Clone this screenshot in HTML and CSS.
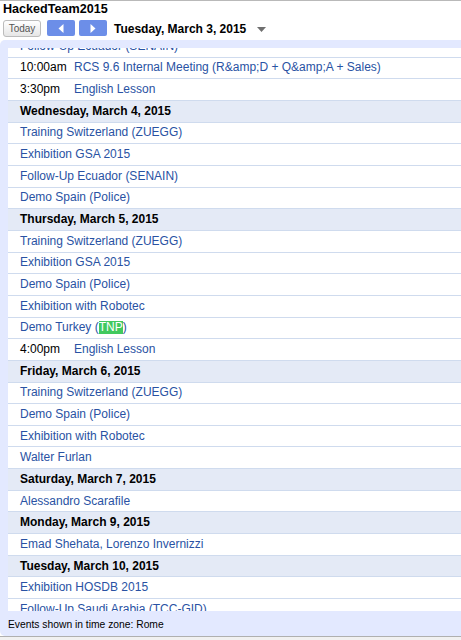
FILE: index.html
```html
<!DOCTYPE html>
<html>
<head>
<meta charset="utf-8">
<title>HackedTeam2015</title>
<link rel="stylesheet" href="styles.css">
</head>
<body>
<div class="page">
  <div class="cal-title">HackedTeam2015</div>
  <div class="toolbar">
    <button class="btn-today">Today</button>
    <div class="nav">
      <button class="btn-nav" aria-label="Previous"><svg width="6" height="9" viewBox="0 0 6 9"><polygon points="5.5,0 5.5,9 0.5,4.5" fill="#fff"/></svg></button>
      <button class="btn-nav" aria-label="Next"><svg width="6" height="9" viewBox="0 0 6 9"><polygon points="0.5,0 0.5,9 5.5,4.5" fill="#fff"/></svg></button>
    </div>
    <div class="date-title">Tuesday, March 3, 2015</div>
    <svg class="dropdown" width="9" height="5" viewBox="0 0 9 5"><polygon points="0,0 9,0 4.5,5" fill="#6f6f6f"/></svg>
  </div>
  <div class="frame">
    <div class="agenda">
      <div class="list">
        <div class="row"><span class="ev">Follow-Up Ecuador (SENAIN)</span></div>
        <div class="row"><span class="time">10:00am</span><span class="ev">RCS 9.6 Internal Meeting (R&amp;amp;D + Q&amp;amp;A + Sales)</span></div>
        <div class="row"><span class="time">3:30pm</span><span class="ev">English Lesson</span></div>
        <div class="row day">Wednesday, March 4, 2015</div>
        <div class="row"><span class="ev">Training Switzerland (ZUEGG)</span></div>
        <div class="row"><span class="ev">Exhibition GSA 2015</span></div>
        <div class="row"><span class="ev">Follow-Up Ecuador (SENAIN)</span></div>
        <div class="row"><span class="ev">Demo Spain (Police)</span></div>
        <div class="row day">Thursday, March 5, 2015</div>
        <div class="row"><span class="ev">Training Switzerland (ZUEGG)</span></div>
        <div class="row"><span class="ev">Exhibition GSA 2015</span></div>
        <div class="row"><span class="ev">Demo Spain (Police)</span></div>
        <div class="row"><span class="ev">Exhibition with Robotec</span></div>
        <div class="row"><span class="ev">Demo Turkey (<span class="hl">TNP</span>)</span></div>
        <div class="row"><span class="time">4:00pm</span><span class="ev">English Lesson</span></div>
        <div class="row day">Friday, March 6, 2015</div>
        <div class="row"><span class="ev">Training Switzerland (ZUEGG)</span></div>
        <div class="row"><span class="ev">Demo Spain (Police)</span></div>
        <div class="row"><span class="ev">Exhibition with Robotec</span></div>
        <div class="row"><span class="ev">Walter Furlan</span></div>
        <div class="row day">Saturday, March 7, 2015</div>
        <div class="row"><span class="ev">Alessandro Scarafile</span></div>
        <div class="row day">Monday, March 9, 2015</div>
        <div class="row"><span class="ev">Emad Shehata, Lorenzo Invernizzi</span></div>
        <div class="row day">Tuesday, March 10, 2015</div>
        <div class="row"><span class="ev">Exhibition HOSDB 2015</span></div>
        <div class="row"><span class="ev">Follow-Up Saudi Arabia (TCC-GID)</span></div>
      </div>
    </div>
    <div class="footer">Events shown in time zone: Rome</div>
  </div>
  <div class="bottom-strip"></div>
</div>
</body>
</html>
```

FILE: styles.css
```css
* { box-sizing: border-box; }
html, body { margin: 0; padding: 0; background: #fff; }
body { font-family: Arial, "Liberation Sans", sans-serif; color: #000; }

.page {
  width: 461px;
  height: 640px;
  border-top: 1px solid #b9b9b9;
  display: flex;
  flex-direction: column;
  overflow: hidden;
}

.cal-title {
  font-size: 12.6px;
  font-weight: bold;
  line-height: 15px;
  padding: 1px 0 0 3px;
}

.toolbar {
  display: flex;
  align-items: center;
  height: 17px;
  margin-top: 3px;
  padding-left: 3px;
}

.btn-today {
  width: 38px;
  height: 17px;
  margin: 0;
  padding: 0;
  border: 1px solid #bcbcbc;
  border-radius: 3px;
  background: linear-gradient(#ffffff, #e6e6e6);
  color: #555;
  font-family: Arial, "Liberation Sans", sans-serif;
  font-size: 10px;
  line-height: 15px;
}

.nav {
  display: flex;
  gap: 4px;
  margin-left: 6px;
  margin-top: -1px;
}

.btn-nav {
  width: 28px;
  height: 16px;
  margin: 0;
  padding: 0;
  border: none;
  border-radius: 2px;
  background: #6c8ee8;
  display: flex;
  align-items: center;
  justify-content: center;
}
.btn-nav svg { display: block; }

.date-title {
  margin-left: 7px;
  font-size: 12px;
  font-weight: bold;
  line-height: 15px;
  padding-top: 1px;
}

.dropdown {
  display: block;
  margin-left: 11px;
  margin-top: 1px;
}

.frame {
  margin-top: 3px;
  height: 596px;
  background: #e3e9ff;
  border-radius: 5px 0 0 5px;
  padding: 8px 0 0 8px;
  display: flex;
  flex-direction: column;
}

.agenda {
  height: 563px;
  flex: none;
  background: #fff;
  overflow: hidden;
}

.list {
  margin-top: -12px;
}

.row {
  height: 21.67px;
  border-bottom: 1px solid #cfdbee;
  padding-left: 12px;
  display: flex;
  align-items: center;
  font-size: 12px;
  line-height: 15px;
  white-space: nowrap;
}

.row.day {
  background: #e4eaf6;
  font-weight: bold;
}

.time {
  width: 54px;
  flex: none;
  color: #000;
}

.ev {
  color: #2952a3;
}

.hl {
  background: #41c95e;
  color: #fff;
  line-height: 13px;
  display: inline-block;
}

.footer {
  height: 25px;
  font-size: 10.3px;
  line-height: 14px;
  padding-top: 7px;
  color: #000;
}

.bottom-strip {
  flex: 1;
  border-top: 1px solid #b0b0b0;
  background: #f1f1f1;
}
```
